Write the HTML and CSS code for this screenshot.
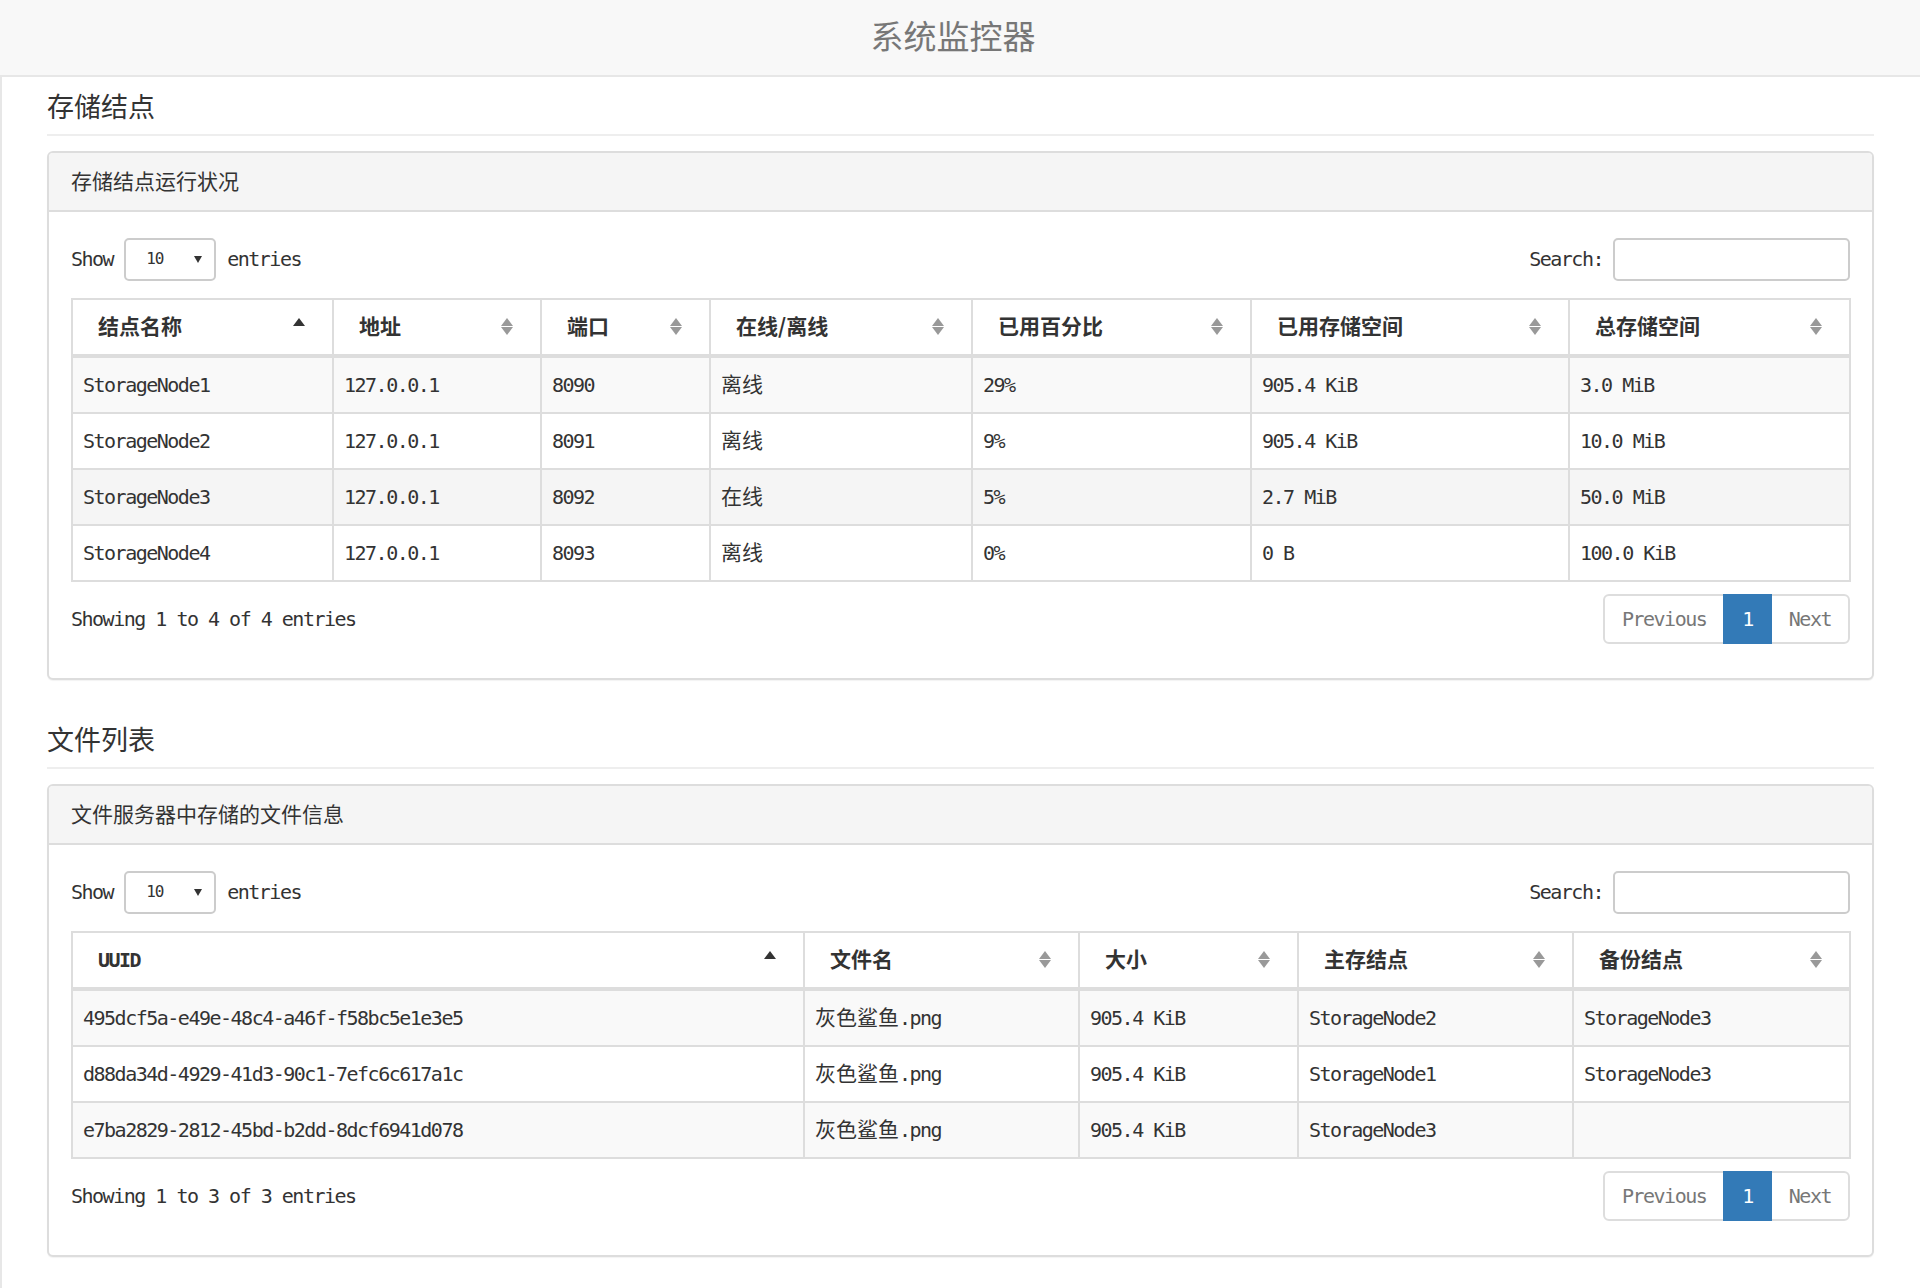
FILE: index.html
```html
<!DOCTYPE html>
<html lang="zh">
<head>
<meta charset="utf-8">
<title>系统监控器</title>
<link rel="stylesheet" href="styles.css">
</head>
<body>
<header class="navbar"><div class="brand">系统监控器</div></header>
<div class="main">
  <h2 class="page-header">存储结点</h2>
  <div class="panel">
    <div class="panel-heading">存储结点运行状况</div>
    <div class="panel-body">
      <div class="dt-top">
        <div class="dt-length">Show<span class="select"><span>10</span><svg width="8" height="7" viewBox="0 0 8 7"><path d="M0 0H8L4 7z" fill="#333"/></svg></span>entries</div>
        <div class="dt-search">Search:<span class="input"></span></div>
      </div>
      <table class="dt">
        <colgroup><col style="width:261px"><col style="width:208px"><col style="width:169px"><col style="width:262px"><col style="width:279px"><col style="width:318px"><col style="width:281px"></colgroup>
        <thead>
          <tr>
            <th class="zh">结点名称<svg class="sort" width="12" height="17" viewBox="0 0 12 17"><path d="M6 0L12 8H0z" fill="#333"/></svg></th>
            <th class="zh">地址<svg class="sort" width="12" height="17" viewBox="0 0 12 17"><path d="M6 0L12 8H0z" fill="#999"/><path d="M0 9H12L6 17z" fill="#999"/></svg></th>
            <th class="zh">端口<svg class="sort" width="12" height="17" viewBox="0 0 12 17"><path d="M6 0L12 8H0z" fill="#999"/><path d="M0 9H12L6 17z" fill="#999"/></svg></th>
            <th class="zh">在线/离线<svg class="sort" width="12" height="17" viewBox="0 0 12 17"><path d="M6 0L12 8H0z" fill="#999"/><path d="M0 9H12L6 17z" fill="#999"/></svg></th>
            <th class="zh">已用百分比<svg class="sort" width="12" height="17" viewBox="0 0 12 17"><path d="M6 0L12 8H0z" fill="#999"/><path d="M0 9H12L6 17z" fill="#999"/></svg></th>
            <th class="zh">已用存储空间<svg class="sort" width="12" height="17" viewBox="0 0 12 17"><path d="M6 0L12 8H0z" fill="#999"/><path d="M0 9H12L6 17z" fill="#999"/></svg></th>
            <th class="zh">总存储空间<svg class="sort" width="12" height="17" viewBox="0 0 12 17"><path d="M6 0L12 8H0z" fill="#999"/><path d="M0 9H12L6 17z" fill="#999"/></svg></th>
          </tr>
        </thead>
        <tbody>
          <tr class="odd"><td>StorageNode1</td><td>127.0.0.1</td><td>8090</td><td><span class="zh">离线</span></td><td>29%</td><td>905.4 KiB</td><td>3.0 MiB</td></tr>
          <tr><td>StorageNode2</td><td>127.0.0.1</td><td>8091</td><td><span class="zh">离线</span></td><td>9%</td><td>905.4 KiB</td><td>10.0 MiB</td></tr>
          <tr class="hover"><td>StorageNode3</td><td>127.0.0.1</td><td>8092</td><td><span class="zh">在线</span></td><td>5%</td><td>2.7 MiB</td><td>50.0 MiB</td></tr>
          <tr><td>StorageNode4</td><td>127.0.0.1</td><td>8093</td><td><span class="zh">离线</span></td><td>0%</td><td>0 B</td><td>100.0 KiB</td></tr>
        </tbody>
      </table>
      <div class="dt-bottom">
        <div class="dt-info">Showing 1 to 4 of 4 entries</div>
        <ul class="pagination">
          <li class="first"><a>Previous</a></li>
          <li class="active"><a>1</a></li>
          <li class="last"><a>Next</a></li>
        </ul>
      </div>
    </div>
  </div>

  <h2 class="page-header">文件列表</h2>
  <div class="panel">
    <div class="panel-heading">文件服务器中存储的文件信息</div>
    <div class="panel-body">
      <div class="dt-top">
        <div class="dt-length">Show<span class="select"><span>10</span><svg width="8" height="7" viewBox="0 0 8 7"><path d="M0 0H8L4 7z" fill="#333"/></svg></span>entries</div>
        <div class="dt-search">Search:<span class="input"></span></div>
      </div>
      <table class="dt">
        <colgroup><col style="width:732px"><col style="width:275px"><col style="width:219px"><col style="width:275px"><col style="width:277px"></colgroup>
        <thead>
          <tr>
            <th class="lat">UUID<svg class="sort" width="12" height="17" viewBox="0 0 12 17"><path d="M6 0L12 8H0z" fill="#333"/></svg></th>
            <th class="zh">文件名<svg class="sort" width="12" height="17" viewBox="0 0 12 17"><path d="M6 0L12 8H0z" fill="#999"/><path d="M0 9H12L6 17z" fill="#999"/></svg></th>
            <th class="zh">大小<svg class="sort" width="12" height="17" viewBox="0 0 12 17"><path d="M6 0L12 8H0z" fill="#999"/><path d="M0 9H12L6 17z" fill="#999"/></svg></th>
            <th class="zh">主存结点<svg class="sort" width="12" height="17" viewBox="0 0 12 17"><path d="M6 0L12 8H0z" fill="#999"/><path d="M0 9H12L6 17z" fill="#999"/></svg></th>
            <th class="zh">备份结点<svg class="sort" width="12" height="17" viewBox="0 0 12 17"><path d="M6 0L12 8H0z" fill="#999"/><path d="M0 9H12L6 17z" fill="#999"/></svg></th>
          </tr>
        </thead>
        <tbody>
          <tr class="odd"><td>495dcf5a-e49e-48c4-a46f-f58bc5e1e3e5</td><td><span class="zh">灰色鲨鱼</span>.png</td><td>905.4 KiB</td><td>StorageNode2</td><td>StorageNode3</td></tr>
          <tr><td>d88da34d-4929-41d3-90c1-7efc6c617a1c</td><td><span class="zh">灰色鲨鱼</span>.png</td><td>905.4 KiB</td><td>StorageNode1</td><td>StorageNode3</td></tr>
          <tr class="odd"><td>e7ba2829-2812-45bd-b2dd-8dcf6941d078</td><td><span class="zh">灰色鲨鱼</span>.png</td><td>905.4 KiB</td><td>StorageNode3</td><td></td></tr>
        </tbody>
      </table>
      <div class="dt-bottom">
        <div class="dt-info">Showing 1 to 3 of 3 entries</div>
        <ul class="pagination">
          <li class="first"><a>Previous</a></li>
          <li class="active"><a>1</a></li>
          <li class="last"><a>Next</a></li>
        </ul>
      </div>
    </div>
  </div>
</div>
</body>
</html>
```

FILE: styles.css
```css
* { box-sizing: border-box; }

html, body {
  margin: 0;
  padding: 0;
}

body {
  font-family: "DejaVu Sans Mono", "Noto Sans CJK SC", monospace;
  font-size: 20px;
  letter-spacing: -1.5px;
  line-height: 30px;
  color: #333;
  background: #fff;
}

.zh {
  font-family: "Noto Sans CJK SC", "DejaVu Sans Mono", sans-serif;
  font-size: 21px;
  letter-spacing: 0;
}

.navbar {
  height: 77px;
  background: #f8f8f8;
  border-bottom: 2px solid #e7e7e7;
  display: flex;
  align-items: center;
  justify-content: center;
  padding-bottom: 4px;
}

.brand {
  font-family: "Noto Sans CJK SC", sans-serif;
  font-size: 33px;
  letter-spacing: 0;
  line-height: 1;
  color: #777;
  padding-right: 14px;
}

.main {
  display: flex;
  flex-direction: column;
  border-left: 2px solid #e7e7e7;
  padding: 0 46px 0 45px;
  min-height: 1211px;
}

.page-header {
  margin: 14px 0 15px;
  padding-bottom: 13px;
  border-bottom: 2px solid #eee;
  font-family: "Noto Sans CJK SC", sans-serif;
  font-size: 27px;
  font-weight: normal;
  letter-spacing: 0;
  line-height: 30px;
  color: #333;
}

.panel {
  border: 2px solid #ddd;
  border-radius: 6px;
  margin-bottom: 30px;
  background: #fff;
  box-shadow: 0 1px 1px rgba(0,0,0,0.05);
}

.panel-heading {
  background: #f5f5f5;
  border-bottom: 2px solid #ddd;
  border-radius: 4px 4px 0 0;
  padding: 11.5px 22px 15.5px;
  font-family: "Noto Sans CJK SC", sans-serif;
  font-size: 21px;
  letter-spacing: 0;
  line-height: 30px;
  color: #333;
}

.panel-body {
  padding: 24px 22px 34px;
}

.dt-top {
  display: flex;
  justify-content: space-between;
  align-items: center;
  height: 46px;
}

.dt-length,
.dt-search {
  display: flex;
  align-items: center;
}

.select {
  display: flex;
  align-items: center;
  justify-content: space-between;
  width: 92px;
  height: 43px;
  margin: 0 11px 0 11px;
  padding: 0 12px 0 20px;
  border: 2px solid #ccc;
  border-radius: 5px;
  font-size: 16px;
  letter-spacing: -1px;
  color: #333;
}

.input {
  display: block;
  width: 237px;
  height: 43px;
  margin-left: 10px;
  border: 2px solid #ccc;
  border-radius: 5px;
}

table.dt {
  width: 100%;
  table-layout: fixed;
  border-collapse: separate;
  border-spacing: 0;
  margin-top: 16px;
  border-top: 2px solid #ddd;
  border-left: 2px solid #ddd;
}

.dt th {
  position: relative;
  text-align: left;
  font-weight: bold;
  height: 58px;
  padding: 10px 30px 14px 25px;
  line-height: 30px;
  border-right: 2px solid #ddd;
  border-bottom: 4px solid #ddd;
  background: #fff;
  white-space: nowrap;
}

.dt th.lat {
  padding-top: 12px;
  padding-bottom: 12px;
}

.dt td {
  height: 56px;
  padding: 12px 10px;
  line-height: 30px;
  border-right: 2px solid #ddd;
  border-bottom: 2px solid #ddd;
  white-space: nowrap;
  overflow: hidden;
}

.dt td .zh {
  line-height: 20px;
}

.dt tr.odd td { background: #f9f9f9; }
.dt tr.hover td { background: #f5f5f5; }

.sort {
  position: absolute;
  right: 27px;
  top: 18px;
}

.dt-bottom {
  display: flex;
  justify-content: space-between;
  align-items: center;
  margin-top: 12px;
  height: 50px;
}

.pagination {
  display: flex;
  list-style: none;
  margin: 0;
  padding: 0;
}

.pagination li a {
  display: block;
  padding: 9px 17px;
  line-height: 28px;
  border: 2px solid #ddd;
  margin-left: -2px;
  color: #777;
  background: #fff;
  position: relative;
}

.pagination li.first a {
  margin-left: 0;
  border-radius: 6px 0 0 6px;
}

.pagination li.last a {
  border-radius: 0 6px 6px 0;
}

.pagination li.active a {
  background: #337ab7;
  border-color: #337ab7;
  color: #fff;
  z-index: 2;
}
```
